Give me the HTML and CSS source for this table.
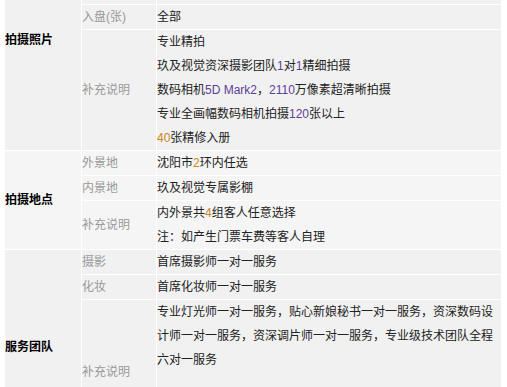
FILE: index.html
```html
<!DOCTYPE html>
<html lang="zh-CN">
<head>
<meta charset="utf-8">
<title>套系详情</title>
<link rel="stylesheet" href="styles.css">
</head>
<body>
<div class="wrap">
<table class="spec">
  <colgroup><col class="c1"><col class="c2"><col class="c3"></colgroup>
  <tbody class="g1">
    <tr><th rowspan="7" class="grp">拍摄照片</th><td class="lbl"></td><td class="val"></td></tr>
    <tr><td class="lbl"></td><td class="val"></td></tr>
    <tr><td class="lbl"></td><td class="val"></td></tr>
    <tr><td class="lbl">入盘(张)</td><td class="val">全部</td></tr>
    <tr>
      <td class="lbl">补充说明</td>
      <td class="val">
        <p>专业精拍</p>
        <p>玖及视觉资深摄影团队<span class="n-p">1</span>对<span class="n-p">1</span>精细拍摄</p>
        <p>数码相机<span class="n-p">5D Mark2</span>，<span class="n-p">2110</span>万像素超清晰拍摄</p>
        <p>专业全画幅数码相机拍摄<span class="n-p">120</span>张以上</p>
        <p><span class="n-o">40</span>张精修入册</p>
      </td>
    </tr>
  </tbody>
  <tbody class="g2">
    <tr><th rowspan="3" class="grp">拍摄地点</th><td class="lbl">外景地</td><td class="val">沈阳市<span class="n-o">2</span>环内任选</td></tr>
    <tr><td class="lbl">内景地</td><td class="val">玖及视觉专属影棚</td></tr>
    <tr>
      <td class="lbl">补充说明</td>
      <td class="val">
        <p>内外景共<span class="n-o">4</span>组客人任意选择</p>
        <p>注：如产生门票车费等客人自理</p>
      </td>
    </tr>
  </tbody>
  <tbody class="g3">
    <tr><th rowspan="3" class="grp">服务团队</th><td class="lbl">摄影</td><td class="val">首席摄影师一对一服务</td></tr>
    <tr><td class="lbl">化妆</td><td class="val">首席化妆师一对一服务</td></tr>
    <tr>
      <td class="lbl">补充说明</td>
      <td class="val">
        <p>专业灯光师一对一服务，贴心新娘秘书一对一服务，资深数码设计师一对一服务，资深调片师一对一服务，专业级技术团队全程六对一服务</p>
        <p>&nbsp;</p>
        <p>&nbsp;</p>
        <p>&nbsp;</p>
      </td>
    </tr>
  </tbody>
</table>
</div>
</body>
</html>
```

FILE: styles.css
```css
html, body {
  margin: 0;
  padding: 0;
  background: #ffffff;
  overflow: hidden;
}
.wrap {
  padding-left: 4px;
  width: 498px;
  height: 387px;
  overflow: hidden;
}
.spec {
  margin-top: -71px;
  width: 498px;
  table-layout: fixed;
  border-collapse: separate;
  border-spacing: 1px;
  background: #ffffff;
  font-family: "Liberation Sans", "Noto Sans CJK SC", sans-serif;
  font-size: 12px;
  line-height: 24px;
}
.c1 { width: 76px; }
.c2 { width: 74px; }
.c3 { width: 344px; }
.spec th, .spec td {
  padding: 0;
  vertical-align: middle;
  text-align: left;
}
.g1 th, .g1 td, .g3 th, .g3 td { background: #f1f1f1; }
.g2 th, .g2 td { background: #f5f5f5; }
.grp {
  padding-left: 6px;
  font-weight: bold;
  color: #000000;
}
.lbl {
  padding-left: 5px;
  color: #999999;
  height: 24px;
}
.val {
  padding: 0 2px 0 5px;
  color: #222222;
}
.val p {
  margin: 0;
}
.n-p { color: #5b3f9a; }
.n-o { color: #c8861e; }
```
